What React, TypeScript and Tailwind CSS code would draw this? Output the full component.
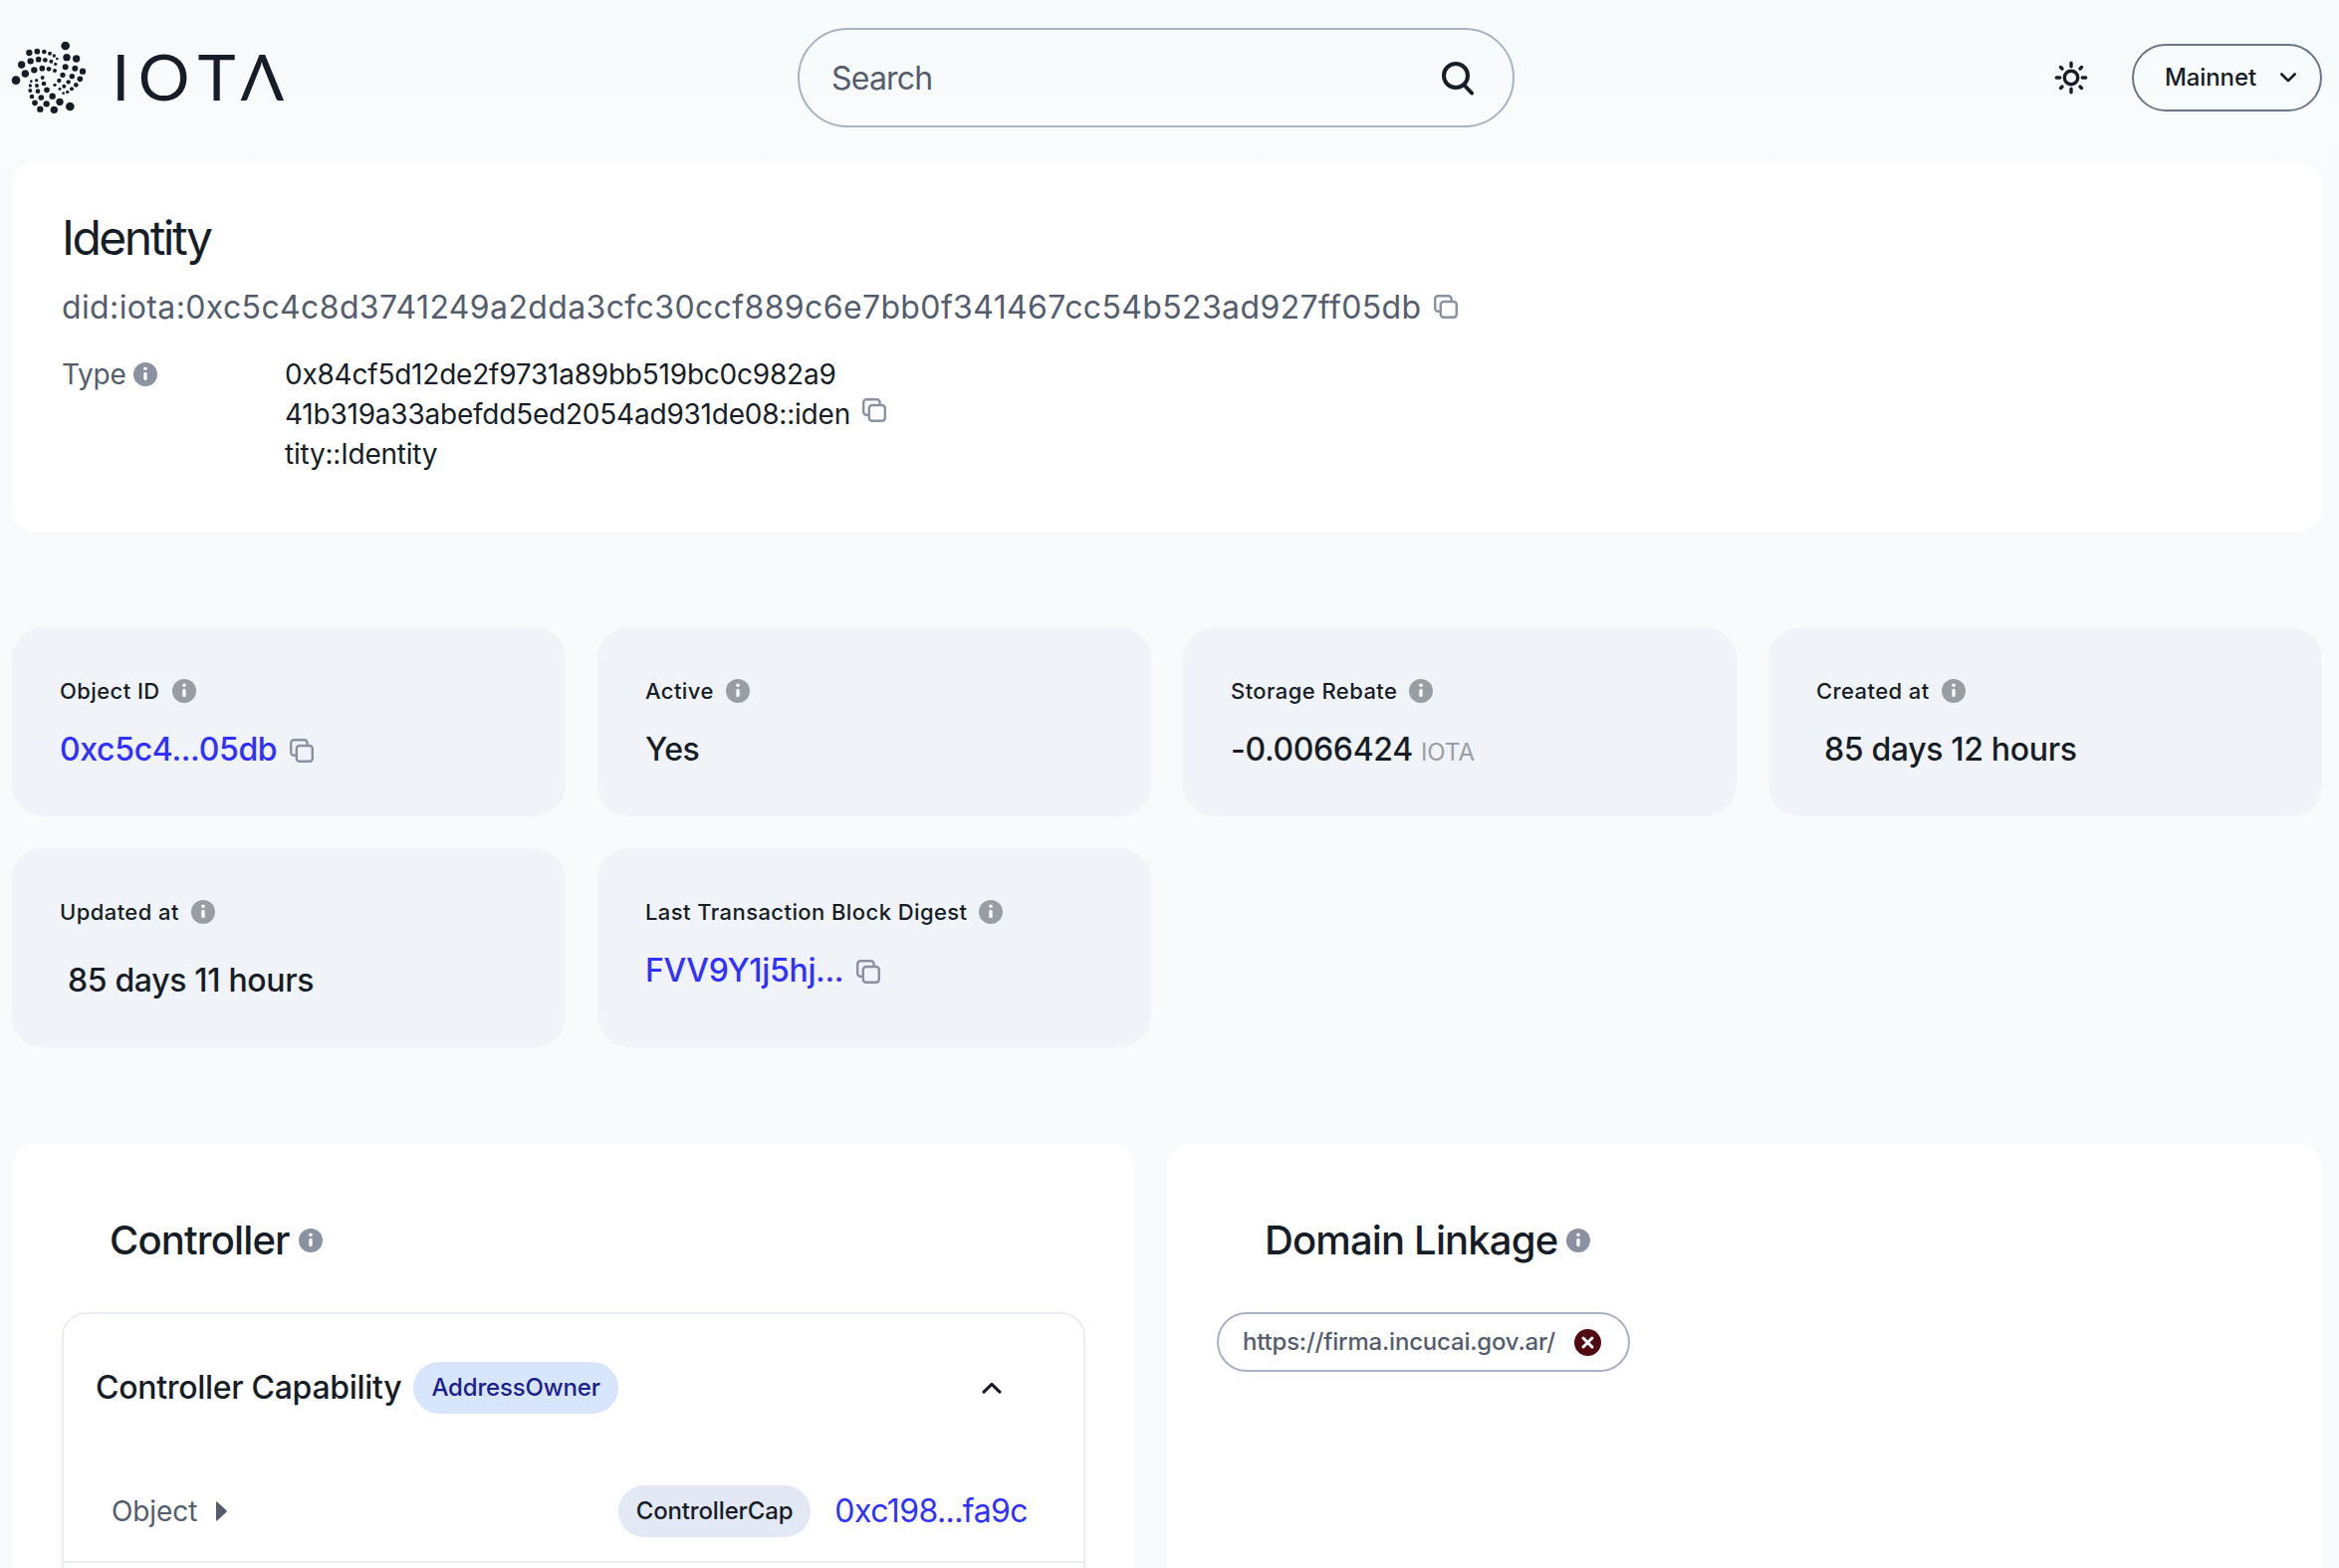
import type { ReactNode } from "react";

// [cx, cy, r] of every dot in the logo mark
const LOGO_DOTS = [
  [197, 78, 13], [201, 113, 11], [230, 117, 11], [197, 142, 9], [226, 146, 9], [249, 155, 9.5],
  [189, 166, 8], [217, 170, 8], [241, 178, 8.5], [178, 183, 6.5], [206, 187, 6.5], [229, 196, 7],
  [165, 196, 5], [193, 200, 6], [216, 208, 6], [180, 208, 4.5], [203, 217, 5], [191, 221, 4],
  [88, 99, 9.5], [112, 95, 8.5], [133, 96, 7], [150, 101, 6], [163, 108, 5], [172, 117, 4],
  [65, 135, 11], [92, 124, 9.5], [116, 119, 8.5], [136, 121, 7], [154, 125, 6], [167, 133, 5],
  [76, 162, 11], [103, 151, 9.5], [127, 146, 8.5], [147, 148, 7], [165, 153, 6], [48, 182, 13],
  [94, 185, 4], [110, 182, 5], [128, 174, 6], [91, 198, 5], [111, 198, 6], [132, 192, 7],
  [91, 213, 6], [114, 215, 7], [141, 211, 8.5], [96, 231, 7], [124, 234, 8.5], [158, 230, 9.5],
  [105, 250, 8.5], [140, 253, 9.5], [180, 247, 11], [121, 269, 9.5], [163, 271, 11], [211, 261, 13],
];

function Logo() {
  return (
    <svg viewBox="36 60 822 225" className="w-[274px] h-[75px] -mt-px overflow-visible fill-[#171d26]">
      {LOGO_DOTS.map(([cx, cy, r], i) => (
        <circle key={i} cx={cx} cy={cy} r={r} />
      ))}
      <text x="364 494 653 790" y="244" textAnchor="middle" fontSize="194" className="font-['Lato']">
        IOTΛ
      </text>
    </svg>
  );
}

function InfoIcon({ className = "fill-[#8a92a1]" }: { className?: string }) {
  return (
    <svg viewBox="0 0 24 24" className={`size-6 shrink-0 ${className}`}>
      <circle cx="12" cy="12" r="12" />
      <circle cx="12" cy="6.2" r="1.8" fill="#fff" />
      <rect x="10.3" y="9.8" width="3.4" height="8.4" rx="1.7" fill="#fff" />
    </svg>
  );
}

function CopyIcon() {
  return (
    <svg viewBox="0 0 24 24" fill="none" strokeWidth="2.4" className="size-6 shrink-0 stroke-[#8a92a1]">
      <rect x="6.8" y="7" width="16" height="15.8" rx="3" />
      <path d="M17.6 6.4V4.2a3 3 0 0 0-3-3H4.2a3 3 0 0 0-3 3v9.6a3 3 0 0 0 3 3h2" />
    </svg>
  );
}

function SearchIcon() {
  return (
    <svg viewBox="0 0 32 34" fill="none" className="mt-0.5 w-8 h-[34px] stroke-[#171d26]">
      <circle cx="14" cy="14" r="12" strokeWidth="4" />
      <path d="M22.5 23.5 30 31.5" strokeWidth="4" strokeLinecap="round" />
    </svg>
  );
}

function SunIcon() {
  return (
    <svg viewBox="-18 -18 36 36" fill="none" strokeWidth="3.4" strokeLinecap="round" className="size-9 stroke-[#171d26]">
      <circle r="6.7" />
      <path d="M0-14.7v3.4M0 14.7v-3.4M-14.7 0h3.4M14.7 0h-3.4" />
      <path d="m-10.5-10.5 1.5 1.5M10.5-10.5 9-9M-10.5 10.5-9 9M10.5 10.5 9 9" />
    </svg>
  );
}

function Chevron({ className }: { className: string }) {
  return (
    <svg viewBox="0 0 16 10" fill="none" strokeWidth="2.6" strokeLinecap="round" strokeLinejoin="round" className={className}>
      <path d="m1.4 1.5 6.6 6.6 6.6-6.6" />
    </svg>
  );
}

function Header() {
  return (
    <header className="flex h-[156px] items-center justify-between">
      <Logo />
      <div className="flex h-[100px] w-[720px] items-center rounded-[50px] border-2 border-[#a9b2c3] pl-8 pr-[39px]">
        <input
          placeholder="Search"
          className="min-w-0 flex-1 bg-transparent pt-0.5 text-[32px] tracking-[-0.8px] outline-none placeholder:text-[#545d6d]"
        />
        <SearchIcon />
      </div>
      <div className="flex items-center gap-[17px]">
        <button className="flex h-16 w-[88px] items-center justify-center">
          <SunIcon />
        </button>
        <button className="flex h-[68px] w-[191px] items-center justify-between rounded-full border-2 border-[#6b7588] pl-[31px] pr-6 text-2xl font-medium tracking-[-0.1px]">
          Mainnet
          <Chevron className="w-4 h-2.5 stroke-[#171d26]" />
        </button>
      </div>
    </header>
  );
}

function IdentityCard() {
  return (
    <section className="h-[372px] rounded-3xl bg-white pl-[50px] pt-[49px]">
      <h1 className="text-[48px] leading-[56px] tracking-[-2.5px]">Identity</h1>
      <div className="mt-5 flex items-center gap-[13px] text-[32px] leading-[44px] text-[#545d6d]">
        <span className="tracking-[0.37px]">
          did:iota:0xc5c4c8d3741249a2dda3cfc30ccf889c6e7bb0f341467cc54b523ad927ff05db
        </span>
        <div className="-mt-0.5">
          <CopyIcon />
        </div>
      </div>
      <div className="mt-[25px] flex text-[28px] leading-10 tracking-[-0.22px]">
        <div className="flex h-10 w-[224px] items-center gap-[7px] text-[#545d6d]">
          Type
          <InfoIcon />
        </div>
        <div className="w-[580px]">
          <span className="block">0x84cf5d12de2f9731a89bb519bc0c982a9</span>
          <span className="block">41b319a33abefdd5ed2054ad931de08::iden</span>
          <span className="block">tity::Identity</span>
        </div>
        <div className="mt-11">
          <CopyIcon />
        </div>
      </div>
    </section>
  );
}

function Stat({ label, children, className = "mt-[19px]" }: { label: string; children: ReactNode; className?: string }) {
  return (
    <div className="rounded-[32px] bg-[#f0f3f8] px-12 pt-12 pb-10">
      <div className="flex h-8 items-center gap-3 text-[22px] font-medium tracking-[0.42px]">
        {label}
        <InfoIcon className="fill-[#999da4]" />
      </div>
      <div className={`text-[32px] leading-[48px] font-medium tracking-[-0.34px] ${className}`}>{children}</div>
    </div>
  );
}

function StatLink({ text }: { text: string }) {
  return (
    <div className="flex items-center gap-[13px]">
      <a className="text-[#3131ff]">{text}</a>
      <div className="mt-px">
        <CopyIcon />
      </div>
    </div>
  );
}

function Stats() {
  return (
    <section className="grid grid-cols-4 grid-rows-[190px_200px] gap-8">
      <Stat label="Object ID">
        <StatLink text="0xc5c4...05db" />
      </Stat>
      <Stat label="Active">Yes</Stat>
      <Stat label="Storage Rebate">
        <div className="flex items-baseline gap-2">
          -0.0066424
          <span className="text-2xl leading-8 font-normal tracking-normal text-[#999da4]">IOTA</span>
        </div>
      </Stat>
      <Stat label="Created at">
        <span className="pl-2">85 days 12 hours</span>
      </Stat>
      <Stat label="Updated at" className="mt-[29px]">
        <span className="pl-2">85 days 11 hours</span>
      </Stat>
      <Stat label="Last Transaction Block Digest">
        <StatLink text="FVV9Y1j5hj..." />
      </Stat>
    </section>
  );
}

function PanelTitle({ children }: { children: ReactNode }) {
  return (
    <h2 className="flex h-14 items-center gap-[9px] pl-12 text-[40px] font-medium tracking-[-0.85px]">
      {children}
      <InfoIcon />
    </h2>
  );
}

function Controller() {
  return (
    <section className="h-[480px] w-[1128px] rounded-t-3xl bg-white px-[50px] pt-[70px]">
      <PanelTitle>Controller</PanelTitle>
      <div className="mt-11 h-[400px] rounded-3xl border-2 border-[#eaeef4] pt-12">
        <div className="flex h-[52px] items-center pl-8 pr-[82px]">
          <span className="text-[32px] font-medium tracking-[-0.3px]">Controller Capability</span>
          <span className="ml-3 flex h-[52px] items-center rounded-full bg-[#d8e6fd] px-[18px] text-2xl font-medium tracking-[-0.17px] text-[#1b1f8c]">
            AddressOwner
          </span>
          <Chevron className="ml-auto w-5 h-3 rotate-180 stroke-[#171d26]" />
        </div>
        <div className="mt-[72px] flex items-center border-b-2 border-[#eaeef4] pb-6 pl-12 pr-14">
          <span className="text-[28px] tracking-[-0.1px] text-[#545d6d]">Object</span>
          <svg viewBox="0 0 10 18" className="ml-[19px] w-[11px] h-5 fill-[#545d6d]">
            <path d="M0 1.2Q0-.6 1.4.8L9.3 8q1 1 0 2L1.4 17.2Q0 18.6 0 16.8Z" />
          </svg>
          <span className="ml-auto flex h-[52px] items-center rounded-full bg-[#e3e8f5] px-[18px] text-2xl font-medium tracking-[-0.15px]">
            ControllerCap
          </span>
          <a className="ml-6 text-[32px] tracking-[-0.58px] text-[#3131ff]">0xc198...fa9c</a>
        </div>
      </div>
    </section>
  );
}

function DomainLinkage() {
  return (
    <section className="h-[480px] w-[1160px] rounded-t-3xl bg-white px-[50px] pt-[70px]">
      <PanelTitle>Domain Linkage</PanelTitle>
      <div className="mt-11 flex h-[60px] w-[415px] items-center justify-between rounded-full border-2 border-[#a9b2c3] pl-6 pr-[27px]">
        <span className="text-2xl font-medium tracking-[-0.2px] text-[#545d6d]">https://firma.incucai.gov.ar/</span>
        <svg viewBox="0 0 27 27" className="size-[27px]">
          <circle cx="13.5" cy="13.5" r="13.5" fill="#520a12" />
          <path d="m9 9 9 9M18 9l-9 9" stroke="#fff" strokeWidth="3" strokeLinecap="round" />
        </svg>
      </div>
    </section>
  );
}

export default function App() {
  return (
    <div className="h-[1575px] w-[2349px] overflow-hidden bg-[#f9fafc] bg-linear-to-b from-[#f7fbfc] to-[#f9fafc] to-[180px] pl-3 pr-[17px] font-['Inter',sans-serif] text-[#171d26]">
      <Header />
      <main className="flex flex-col gap-24 pt-1.5">
        <IdentityCard />
        <Stats />
        <div className="flex gap-8">
          <Controller />
          <DomainLinkage />
        </div>
      </main>
    </div>
  );
}
